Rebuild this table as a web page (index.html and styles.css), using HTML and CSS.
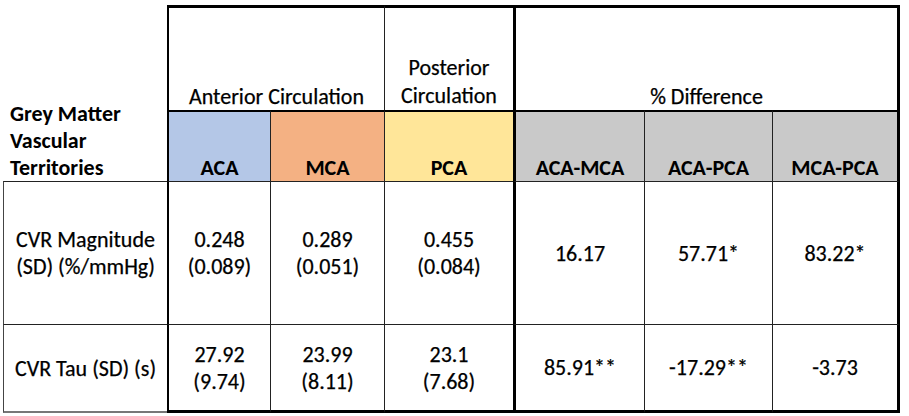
FILE: index.html
```html
<!DOCTYPE html>
<html lang="en">
<head>
<meta charset="utf-8">
<title>Grey Matter Vascular Territories</title>
<link rel="stylesheet" href="styles.css">
</head>
<body>
<div class="sheet">
  <div class="grid">
    <div class="cell corner bold">Grey Matter<br>Vascular<br>Territories</div>
    <div class="cell h1 aca-span">Anterior Circulation</div>
    <div class="cell h1 post">Posterior<br>Circulation</div>
    <div class="cell h1 diff">% Difference</div>

    <div class="cell h2 bold c-aca">ACA</div>
    <div class="cell h2 bold c-mca">MCA</div>
    <div class="cell h2 bold c-pca">PCA</div>
    <div class="cell h2 bold c-gray thick-left">ACA-MCA</div>
    <div class="cell h2 bold c-gray">ACA-PCA</div>
    <div class="cell h2 bold c-gray thick-right">MCA-PCA</div>

    <div class="cell d1 first">CVR Magnitude<br>(SD) (%/mmHg)</div>
    <div class="cell d1 aca">0.248<br>(0.089)</div>
    <div class="cell d1">0.289<br>(0.051)</div>
    <div class="cell d1">0.455<br>(0.084)</div>
    <div class="cell d1 thick-left">16.17</div>
    <div class="cell d1">57.71*</div>
    <div class="cell d1 thick-right">83.22*</div>

    <div class="cell d2 first">CVR Tau (SD) (s)</div>
    <div class="cell d2 aca">27.92<br>(9.74)</div>
    <div class="cell d2">23.99<br>(8.11)</div>
    <div class="cell d2">23.1<br>(7.68)</div>
    <div class="cell d2 thick-left">85.91**</div>
    <div class="cell d2">-17.29**</div>
    <div class="cell d2 thick-right">-3.73</div>
  </div>
</div>
</body>
</html>
```

FILE: styles.css
```css
html, body {
  margin: 0;
  padding: 0;
  background: #ffffff;
}

.sheet {
  padding: 5px 0 0 3px;
  font-family: Carlito, Lato, "Liberation Sans", sans-serif;
  font-size: 22px;
  line-height: 27px;
  color: #000;
  -webkit-text-stroke: 0.25px #000;
}

.grid {
  display: grid;
  grid-template-columns: 164px 103px 114px 129px 131px 128px 128px;
  grid-template-rows: 105px 71px 143px 89px;
  width: 897px;
}

.cell {
  box-sizing: border-box;
  display: flex;
  flex-direction: column;
  align-items: center;
  justify-content: center;
  text-align: center;
  border-left: 1px solid #222;
  border-top: 1px solid #222;
}

.bold {
  font-weight: 700;
  -webkit-text-stroke: 0;
}

.corner {
  grid-column: 1;
  grid-row: 1 / span 2;
  border: none;
  align-items: flex-start;
  justify-content: flex-end;
  text-align: left;
  padding: 0 0 0 7px;
}

.h1 {
  border-top: 3px solid #000;
  justify-content: flex-end;
  padding-bottom: 0;
}

.aca-span {
  grid-column: 2 / span 2;
  border-left: 2px solid #000;
}

.post {
  grid-column: 4;
  line-height: 28px;
}

.diff {
  grid-column: 5 / span 3;
  border-left: 3px solid #000;
  border-right: 3px solid #000;
}

.h2 {
  border-top: 2px solid #000;
  justify-content: flex-end;
  padding-bottom: 0;
}

.c-aca { background: #b4c7e7; border-left: 2px solid #000; }
.c-mca { background: #f4b183; }
.c-pca { background: #ffe699; }
.c-gray { background: #c9c9c9; }

.thick-left { border-left: 3px solid #000; }
.thick-right { border-right: 3px solid #000; }

.aca { border-left: 2px solid #000; }

.first { border-left: 1px solid #444; }

.d2 {
  border-bottom: 3px solid #000;
}

.d2.first {
  border-bottom: 2px solid #777;
}
```
